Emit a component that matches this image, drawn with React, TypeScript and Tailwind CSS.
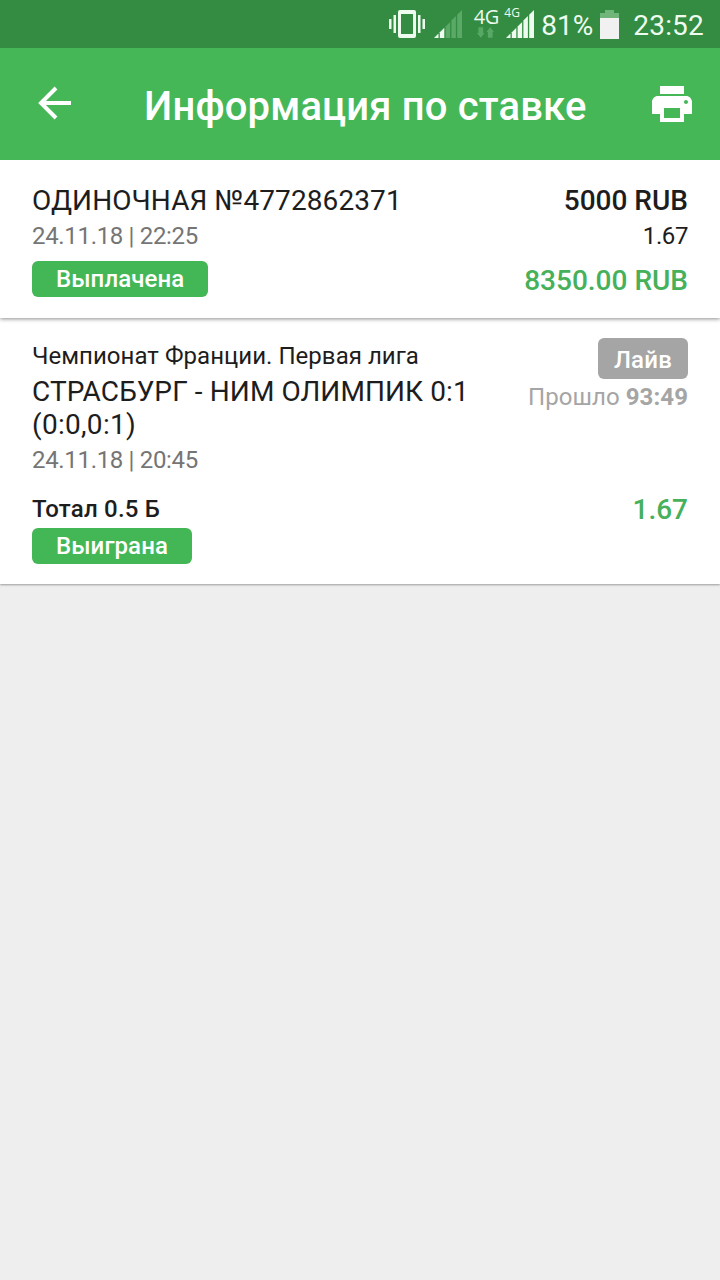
import React from 'react';
import { MdPrint } from 'react-icons/md';

const StatusBar = () => (
  <div className="flex h-12 items-center justify-end bg-[#338c42] pr-4 text-[#eefbef]">
    {/* Vibrate */}
    <svg className="h-7 w-9 shrink-0" viewBox="0 0 36 28" fill="currentColor">
      <path fillRule="evenodd" d="M11 0h14a2 2 0 0 1 2 2v24a2 2 0 0 1-2 2H11a2 2 0 0 1-2-2V2a2 2 0 0 1 2-2zm1 4v20h12V4z" />
      <path d="M4.500 5h2.500v18h-2.500zM0 9h2.500v10H0zM29 5h2.500v18H29zM33.500 9H36v10h-2.500z" />
    </svg>
    <SignalBars className="ml-[9px] h-7 w-[30px] shrink-0" strength={2} />
    <div className="ml-[9px] flex h-8 w-[26px] flex-col items-center">
      <span className="h-[19px] font-['Open_Sans'] text-[20px] font-medium leading-[18px] tracking-[-0.5px]">4G</span>
      <svg className="mr-px h-[11px] w-[17px]" viewBox="0 0 18 11" fill="#58a865">
        <path d="M1.500 0h5v6H8L4 11 0 6h1.500zM11.500 11h5V5H18l-4-5-4 5h1.500z" />
      </svg>
    </div>
    <div className="relative ml-[7px] h-7 w-[30px] shrink-0">
      <SignalBars className="h-7 w-[30px]" strength={5} />
      <span className="absolute -left-[2px] -top-[3px] font-['Open_Sans'] text-[12px] font-medium leading-[12px]">4G</span>
    </div>
    <span className="ml-[5px] mt-[2px] w-[54px] whitespace-nowrap text-[28px] leading-[33px]">81%</span>
    <svg className="ml-[5px] h-[29px] w-[19px] shrink-0" viewBox="0 0 19 29">
      <path d="M5 0h9v3h5v5H0V3h5z" fill="#70b67b" />
      <path d="M0 8h19v21H0z" fill="#f1f1f1" />
    </svg>
    <span className="ml-[14px] mt-[2px] text-[28px] leading-[33px] tracking-[0.2px]">23:52</span>
  </div>
);

const bars = [
  'M0 28L4.500 23.500V28z',
  'M5.800 28V22.200L10.300 17.700V28z',
  'M11.600 28V16.400L16.100 11.900V28z',
  'M17.400 28V10.600L21.900 6.100V28z',
  'M23.200 28V4.800L28 0V28z',
];

const SignalBars = ({ className, strength }: { className: string; strength: number }) => (
  <svg className={className} viewBox="0 0 30 28">
    {bars.map((d, i) => (
      <path key={d} d={d} fill={i < strength ? '#eefbef' : '#5aa967'} />
    ))}
  </svg>
);

const Header = () => (
  <header className="relative z-20 flex h-28 items-center bg-[#46b757] pl-[38px] pr-6 text-white">
    <svg className="mb-[1px] h-[34px] w-[34px] shrink-0 -translate-y-px" viewBox="0 0 34 34" fill="none" stroke="currentColor" strokeWidth="4">
      <path d="M33 17H4M18 2L3 17l15 15" />
    </svg>
    <h1 className="ml-[72px] mt-[6px] whitespace-nowrap text-[40px] font-medium leading-[48px] tracking-[0.16px]">
      Информация по ставке
    </h1>
    <MdPrint className="ml-auto h-12 w-12 shrink-0" />
  </header>
);

const Badge = ({ children }: { children: React.ReactNode }) => (
  <span className="block h-9 w-fit rounded-md bg-[#43b755] px-6 text-[24px] font-medium leading-9 tracking-[0.08px] text-white">
    {children}
  </span>
);

const BetSummary = () => (
  <section className="relative z-10 flex h-[158px] justify-between bg-white px-8 pt-6 shadow-[0_1px_4px_rgba(0,0,0,0.45)]">
    <div>
      <div className="text-[28px] leading-[33px] tracking-[0.1px]">ОДИНОЧНАЯ №4772862371</div>
      <div className="mt-[5px] mb-[11px] text-[24px] leading-7 tracking-[-0.33px] text-[#757575]">24.11.18 | 22:25</div>
      <Badge>Выплачена</Badge>
    </div>
    <div className="text-right">
      <div className="text-[28px] font-medium leading-[33px]">5000 RUB</div>
      <div className="mt-[5px] text-[24px] leading-7 tracking-[-0.4px]">1.67</div>
      <div className="mt-[14px] text-[28px] font-medium leading-[33px] text-[#46b05a]">8350.00 RUB</div>
    </div>
  </section>
);

const EventCard = () => (
  <section className="h-[266px] bg-white px-8 pt-5 shadow-[0_1px_2px_rgba(0,0,0,0.35)]">
    <div className="flex justify-between">
      <div className="w-[460px] pt-1">
        <div className="text-[24px] leading-7 tracking-[0.04px]">Чемпионат Франции. Первая лига</div>
        <div className="mt-[5px] text-[28px] leading-[33px] tracking-[0.1px]">
          СТРАСБУРГ - НИМ ОЛИМПИК 0:1
          <br />
          <span className="tracking-[0.3px]">(0:0,0:1)</span>
        </div>
        <div className="mt-[5px] text-[24px] leading-7 tracking-[-0.33px] text-[#757575]">24.11.18 | 20:45</div>
      </div>
      <div className="flex flex-col items-end">
        <span className="h-[41px] rounded-md bg-[#a5a5a5] px-4 text-[24px] font-medium leading-[44px] tracking-[0.2px] text-white">
          Лайв
        </span>
        <div className="mt-1 text-[24px] leading-7 tracking-[0.08px] text-[#a5a5a5]">
          Прошло <span className="font-bold">93:49</span>
        </div>
      </div>
    </div>
    <div className="mt-5 flex justify-between">
      <div>
        <div className="mt-[1px] mb-[5px] text-[24px] font-medium leading-7 tracking-[0.22px]">Тотал 0.5 Б</div>
        <Badge>Выиграна</Badge>
      </div>
      <div className="-mt-px text-[28px] font-medium leading-[33px] text-[#46b05a]">1.67</div>
    </div>
  </section>
);

export default function App() {
  return (
    <div className="min-h-screen overflow-hidden bg-[#eeeeee] font-[Roboto,sans-serif] text-[#1d1d1d]">
      <StatusBar />
      <Header />
      <BetSummary />
      <EventCard />
    </div>
  );
}
